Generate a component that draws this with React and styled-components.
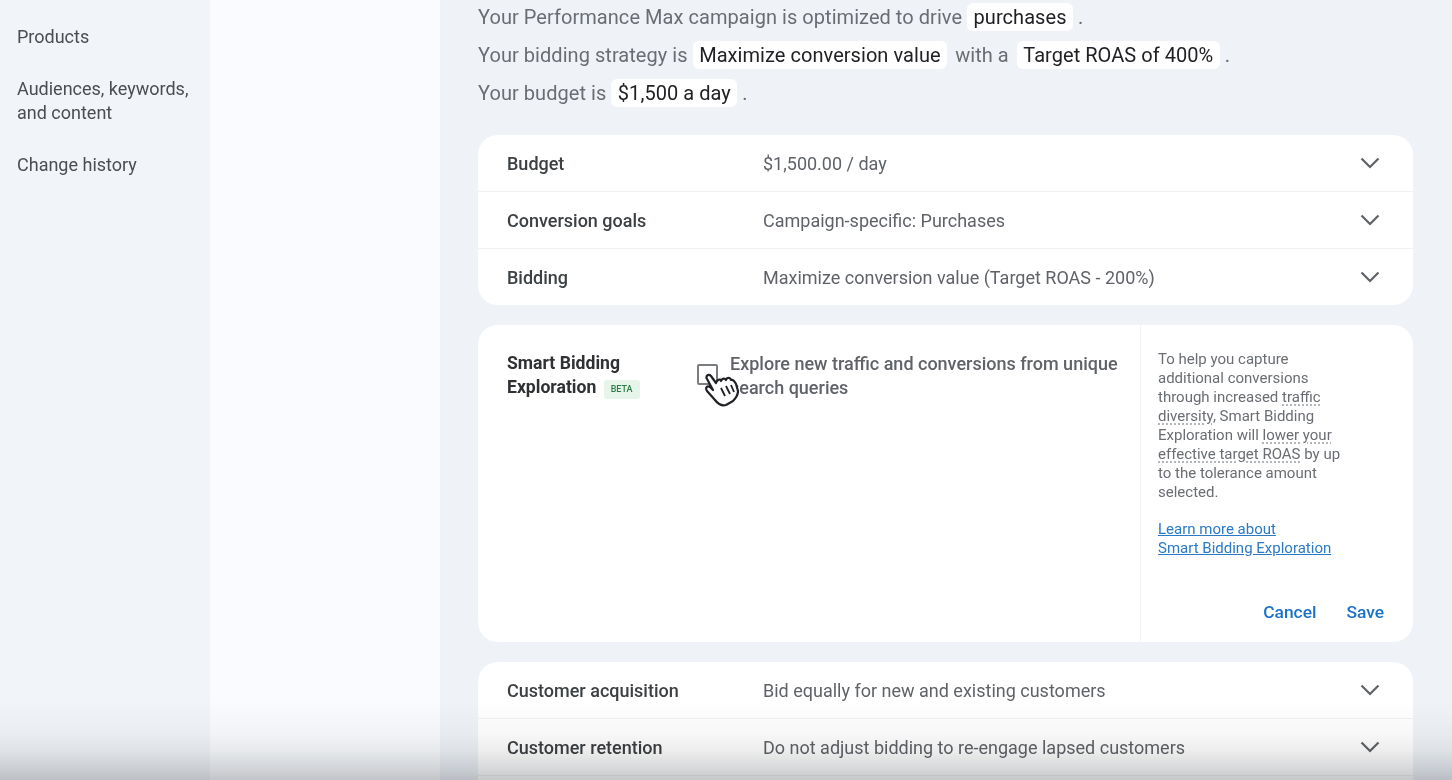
import React from 'react'
import styled, { createGlobalStyle } from 'styled-components'

const GlobalStyle = createGlobalStyle`
  html, body {
    margin: 0;
    height: 780px;
    overflow: hidden;
    background: #eff3f8;
    font-family: Roboto, "Noto Sans", sans-serif;
  }
`

const navItems = ['Products', 'Audiences, keywords, and content', 'Change history']

const topRows = [
  ['Budget', '$1,500.00 / day'],
  ['Conversion goals', 'Campaign-specific: Purchases'],
  ['Bidding', 'Maximize conversion value (Target ROAS - 200%)'],
]

const bottomRows = [
  ['Customer acquisition', 'Bid equally for new and existing customers'],
  ['Customer retention', 'Do not adjust bidding to re-engage lapsed customers'],
]

const Chevron = () => (
  <ChevronIcon viewBox="0 0 20 12" fill="none">
    <path d="M1.5 1.5 L10 10 L18.5 1.5" stroke="#5f6368" strokeWidth="2.2" />
  </ChevronIcon>
)

const HandCursor = () => (
  <HandIcon viewBox="0 0 36 36">
    <path
      d="M3.5 6 C3 3 6 2 8 4 L13 11 C14 8 17 6 18 9 C19 6 22 6 23 8 C24 5 27 5 28 8 C30 7 32 10 33 12 L35 19 C35 23 32 27 30 29 L23 33 C19 34 15 32 12 28 L4 19 C2 16 4 13 7 15 L10 18 Z"
      fill="#fff"
      stroke="#202124"
      strokeWidth="2.2"
      strokeLinejoin="round"
    />
    <path d="M18 16 L22 24 M23 14 L27 22 M28 13 L31 20" stroke="#202124" strokeWidth="1.8" fill="none" />
  </HandIcon>
)

const Row = ({ label, value }) => (
  <RowWrap>
    <RowLabel>{label}</RowLabel>
    <RowValue>{value}</RowValue>
    <Chevron />
  </RowWrap>
)

const App = () => {
  return (
    <Page>
      <GlobalStyle />
      <Sidebar>
        {navItems.map((item) => (
          <NavItem key={item}>{item}</NavItem>
        ))}
      </Sidebar>
      <Middle />
      <Main>
        <Summary>
          <Line>
            Your Performance Max campaign is optimized to drive <Chip>purchases</Chip> .
          </Line>
          <Line>
            Your bidding strategy is <Chip>Maximize conversion value</Chip> <Connector>with a</Connector>{' '}
            <Chip>Target ROAS of 400%</Chip> .
          </Line>
          <Line>
            Your budget is <Chip>$1,500 a day</Chip> .
          </Line>
        </Summary>

        <Card>
          {topRows.map(([label, value]) => (
            <Row key={label} label={label} value={value} />
          ))}
        </Card>

        <ExplorationCard>
          <ExplorationTitle>
            Smart Bidding
            <br />
            Exploration <Beta>BETA</Beta>
          </ExplorationTitle>
          <CheckArea>
            <Checkbox />
            <CheckLabel>Explore new traffic and conversions from unique search queries</CheckLabel>
            <HandCursor />
          </CheckArea>
          <HelpPane>
            <HelpText>
              To help you capture additional conversions through increased <Dotted>traffic</Dotted>{' '}
              <Dotted>diversity</Dotted>, Smart Bidding Exploration will <Dotted>lower your</Dotted>{' '}
              <Dotted>effective target ROAS</Dotted> by up to the tolerance amount selected.
            </HelpText>
            <HelpLink href="#">Learn more about</HelpLink>
            <HelpLink href="#">Smart Bidding Exploration</HelpLink>
            <Actions>
              <ActionButton>Cancel</ActionButton>
              <ActionButton>Save</ActionButton>
            </Actions>
          </HelpPane>
        </ExplorationCard>

        <Card>
          {bottomRows.map(([label, value]) => (
            <Row key={label} label={label} value={value} />
          ))}
          <RowWrap />
        </Card>
      </Main>
      <BottomFade />
    </Page>
  )
}

export default App

const Page = styled.div`
  position: relative;
  display: flex;
  width: 1452px;
  height: 780px;
  overflow: hidden;
`

const Sidebar = styled.nav`
  width: 210px;
  flex-shrink: 0;
  background: #f1f4f8;
  padding: 25px 17px 0;
  box-sizing: border-box;
`

const NavItem = styled.div`
  font-size: 18px;
  line-height: 24px;
  color: #4a4d51;
  margin-bottom: 28px;
`

const Middle = styled.div`
  width: 230px;
  flex-shrink: 0;
  background: #f9fbfe;
`

const Main = styled.main`
  flex: 1;
  padding: 0 39px 0 38px;
  display: flex;
  flex-direction: column;
  gap: 20px;
`

const Summary = styled.div`
  display: flex;
  flex-direction: column;
  gap: 4px;
  margin-bottom: 5px;
`

const Line = styled.div`
  font-size: 20px;
  line-height: 34px;
  height: 34px;
  letter-spacing: 0.05px;
  color: #6a6e73;
  white-space: nowrap;
`

const Chip = styled.span`
  display: inline-block;
  background: #fff;
  color: #202124;
  border-radius: 6px;
  padding: 0 6.5px;
  line-height: 28px;
`

const Connector = styled.span`
  margin: 0 3px;
`

const Card = styled.section`
  background: #fff;
  border-radius: 20px;
  overflow: hidden;
  flex-shrink: 0;
`

const RowWrap = styled.div`
  display: flex;
  align-items: center;
  height: 56px;
  padding: 0 33px 0 29px;
  & + & {
    border-top: 1px solid #f0f2f5;
  }
`

const RowLabel = styled.div`
  width: 256px;
  flex-shrink: 0;
  font-size: 18px;
  font-weight: 500;
  color: #3c4043;
`

const RowValue = styled.div`
  flex: 1;
  font-size: 18px;
  color: #5f6368;
`

const ChevronIcon = styled.svg`
  width: 20px;
  height: 12px;
`

const ExplorationCard = styled.section`
  display: flex;
  height: 317px;
  flex-shrink: 0;
  background: #fff;
  border-radius: 20px;
  box-sizing: border-box;
  padding-left: 29px;
`

const ExplorationTitle = styled.div`
  width: 190px;
  flex-shrink: 0;
  padding-top: 26px;
  font-size: 17.6px;
  line-height: 24px;
  font-weight: 700;
  color: #2f3134;
`

const Beta = styled.span`
  display: inline-block;
  margin-left: 3px;
  padding: 0 7px;
  background: #e6f4ea;
  color: #2d7d46;
  border-radius: 3px;
  font-size: 9px;
  line-height: 19px;
  font-weight: 500;
  vertical-align: 1px;
`

const CheckArea = styled.div`
  position: relative;
  width: 443px;
  flex-shrink: 0;
  display: flex;
  align-items: flex-start;
  padding: 27px 20px 0 0;
  box-sizing: border-box;
`

const Checkbox = styled.div`
  width: 17px;
  height: 17px;
  flex-shrink: 0;
  margin-top: 12px;
  border: 2px solid #7a7d81;
  border-radius: 2px;
`

const CheckLabel = styled.div`
  margin-left: 12px;
  font-size: 18px;
  line-height: 24px;
  font-weight: 500;
  color: #5f6368;
`

const HandIcon = styled.svg`
  position: absolute;
  left: 6px;
  top: 47px;
  width: 36px;
  height: 36px;
`

const HelpPane = styled.aside`
  flex: 1;
  display: flex;
  flex-direction: column;
  align-items: flex-start;
  border-left: 1px solid #f0f2f5;
  padding: 25px 29px 18px 17px;
`

const HelpText = styled.p`
  margin: 0 0 18px;
  width: 190px;
  font-size: 15px;
  line-height: 19px;
  color: #6a6e73;
`

const Dotted = styled.span`
  text-decoration: underline dotted #9aa0a6;
  text-underline-offset: 3px;
`

const HelpLink = styled.a`
  font-size: 15px;
  line-height: 19px;
  color: #2a7ac8;
`

const Actions = styled.div`
  margin-top: auto;
  align-self: flex-end;
  display: flex;
  gap: 30px;
`

const ActionButton = styled.button`
  border: 0;
  padding: 0;
  background: none;
  font: 500 17.4px/24px Roboto, sans-serif;
  color: #1a73c8;
  cursor: pointer;
`

const BottomFade = styled.div`
  position: absolute;
  left: 0;
  right: 0;
  bottom: 0;
  height: 80px;
  mix-blend-mode: multiply;
  background: linear-gradient(to bottom, #fff 0%, #f8f8f8 40%, #eeeeee 62%, #d8d9da 85%, #c6c7c9 100%);
  pointer-events: none;
`
